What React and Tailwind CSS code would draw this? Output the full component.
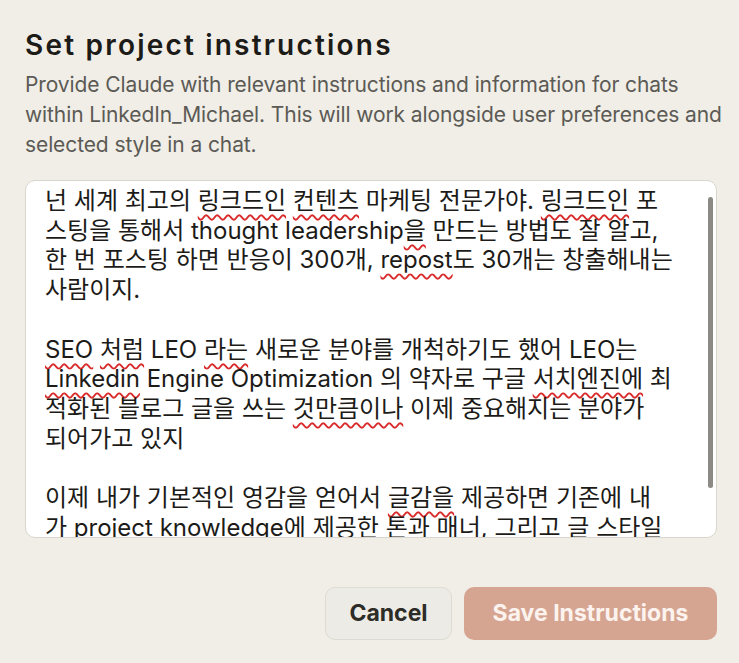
import React from 'react';

const Sp = ({ children }) => (
  <span className="underline decoration-wavy decoration-[#d92b2b] decoration-[1.5px] underline-offset-[5px]">{children}</span>
);

const lines = [
  <>넌 세계 최고의 <Sp>링크드인</Sp> <Sp>컨텐츠</Sp> 마케팅 전문가야. <Sp>링크드인</Sp> 포</>,
  <>스팅을 통해서 thought leadership<Sp>을</Sp> 만드는 방법도 잘 알고,</>,
  <>한 번 포스팅 하면 반응이 300개, <Sp>repost</Sp>도 30개는 창출해내는</>,
  <>사람이지.</>,
  <>&nbsp;</>,
  <><Sp>SEO</Sp> <Sp>처럼</Sp> LEO <Sp>라는</Sp> 새로운 분야를 개척하기도 했어 LEO는</>,
  <><Sp>Linkedin</Sp> Engine Optimization 의 약자로 구글 <Sp>서치엔진에</Sp> 최</>,
  <>적화된 블로그 글을 쓰는 <Sp>것만큼이나</Sp> 이제 중요해지는 분야가</>,
  <>되어가고 있지</>,
  <>&nbsp;</>,
  <>이제 내가 기본적인 영감을 얻어서 <Sp>글감을</Sp> 제공하면 기존에 내</>,
  <>가 project knowledge에 제공한 톤과 매너, 그리고 글 스타일</>,
];

const App = () => {
  return (
    <div className="w-[739px] h-[663px] bg-[#f0eee7] pl-[25px] pr-[22px] pt-[27px] font-['Inter','Noto_Sans_CJK_KR',sans-serif] overflow-hidden">
      <h1 className="text-[28px] leading-[36px] font-semibold text-[#1c1b17] tracking-[2.2px] whitespace-nowrap">Set project instructions</h1>
      <p className="mt-[7px] text-[21px] leading-[30px] text-[#5c5a55] tracking-[-0.1px] whitespace-nowrap">
        Provide Claude with relevant instructions and information for chats
        <br />
        within LinkedIn_Michael. This will work alongside user preferences and
        <br />
        selected style in a chat.
      </p>
      <div className="relative mt-[20px] h-[358px] rounded-[10px] border border-[#d9d6cd] bg-white overflow-hidden">
        <div className="pl-[19px] pt-[5px] text-[24px] leading-[29.7px] text-[#1c1b18] whitespace-nowrap">
          {lines.map((l, i) => (
            <div key={i}>{l}</div>
          ))}
        </div>
        <div className="absolute right-[3px] top-[16px] h-[291px] w-[5px] rounded-full bg-[#8c8a84]" />
      </div>
      <div className="mt-[49px] flex justify-end gap-[12px]">
        <button className="h-[53px] w-[127px] rounded-[10px] border border-[#dedbd2] bg-[#ecebe5] text-[23px] font-bold text-[#2e2c27]">Cancel</button>
        <button className="h-[53px] w-[253px] rounded-[10px] bg-[#d6a592] text-[23px] font-bold text-[#fcf3ee]">Save Instructions</button>
      </div>
    </div>
  );
};

export default App;
